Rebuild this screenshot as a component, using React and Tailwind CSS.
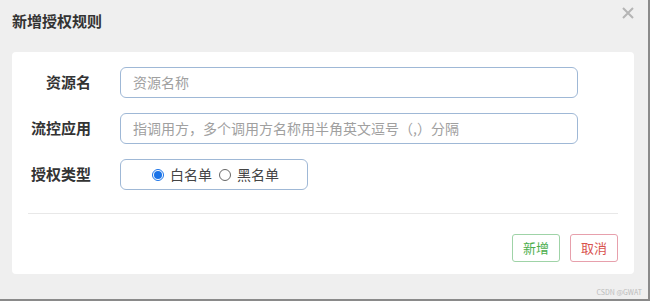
import React from "react";

const font = { fontFamily: '"Noto Sans CJK SC", "Noto Sans", sans-serif' };

function App() {
  return (
    <div
      className="relative w-[650px] h-[301px] bg-[#efefef] overflow-hidden border-r-2 border-b-2 border-[#8a8a8a]"
      style={font}
    >
      {/* Header */}
      <div className="flex items-start justify-between h-[40px] pl-[12px] pr-[14px]">
        <h2 className="mt-[13px] text-[15px] font-bold text-[#333] leading-none">新增授权规则</h2>
        <button className="mt-[7px] w-[12px] h-[12px] text-[#b5b5b5]">
          <svg viewBox="0 0 12 12" className="w-[12px] h-[12px]" stroke="currentColor" strokeWidth="2">
            <path d="M1 1l10 10M11 1L1 11" />
          </svg>
        </button>
      </div>

      {/* Body */}
      <div className="mx-[12px] mt-[12px] w-[622px] h-[222px] bg-white rounded-[4px] px-[16px] pt-[15px]">
        <div className="flex flex-col gap-[15px]">
          <div className="flex items-center">
            <label className="w-[63px] text-right text-[15px] font-bold text-[#333]">资源名</label>
            <div className="ml-[29px] w-[458px] h-[31px] border border-[#9fb8d6] rounded-[6px] flex items-center px-[12px] text-[14px] text-[#a0a0a0]">
              资源名称
            </div>
          </div>
          <div className="flex items-center">
            <label className="w-[63px] text-right text-[15px] font-bold text-[#333]">流控应用</label>
            <div className="ml-[29px] w-[458px] h-[31px] border border-[#9fb8d6] rounded-[6px] flex items-center px-[12px] text-[14px] text-[#a0a0a0]">
              指调用方，多个调用方名称用半角英文逗号（,）分隔
            </div>
          </div>
          <div className="flex items-center">
            <label className="w-[63px] text-right text-[15px] font-bold text-[#333]">授权类型</label>
            <div className="ml-[29px] w-[188px] h-[31px] border border-[#9fb8d6] rounded-[6px] flex items-center pl-[31px] gap-[7px] text-[14px] text-[#444]">
              <span className="flex items-center gap-[6px]">
                <span className="w-[12px] h-[12px] rounded-full border border-[#1a73e8] flex items-center justify-center">
                  <span className="w-[8px] h-[8px] rounded-full bg-[#1a73e8]" />
                </span>
                白名单
              </span>
              <span className="flex items-center gap-[6px]">
                <span className="w-[12px] h-[12px] rounded-full border border-[#666]" />
                黑名单
              </span>
            </div>
          </div>
        </div>

        <div className="mt-[23px] h-px bg-[#e8e8e8]" />

        <div className="flex justify-end gap-[10px] mt-[20px]">
          <button className="w-[48px] h-[28px] border border-[#9fd3a7] rounded-[3px] text-[13px] text-[#4cae4c] bg-white">
            新增
          </button>
          <button className="w-[48px] h-[28px] border border-[#e7a0ac] rounded-[3px] text-[13px] text-[#d9534f] bg-white">
            取消
          </button>
        </div>
      </div>

      <div className="absolute right-[6px] bottom-[3px] text-[7px] text-[#bbb] leading-none">CSDN @GWAT</div>
    </div>
  );
}

export default App;
